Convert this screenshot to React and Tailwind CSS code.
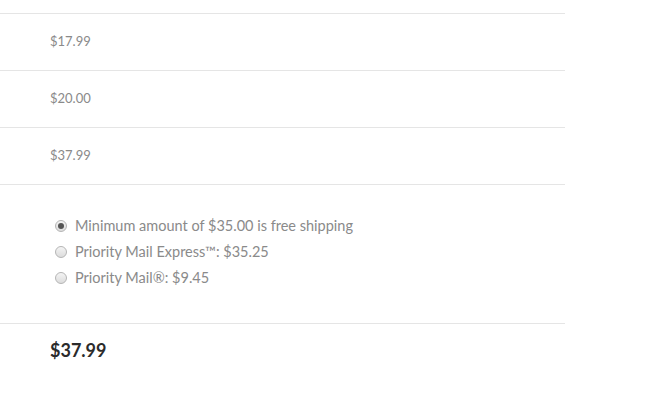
export default function App() {
  const rows = ['$17.99', '$20.00', '$37.99']
  const options = [
    { label: 'Minimum amount of $35.00 is free shipping', checked: true },
    { label: 'Priority Mail Express™: $35.25', checked: false },
    { label: 'Priority Mail®: $9.45', checked: false },
  ]

  return (
    <div className="w-[671px] h-[401px] bg-white overflow-hidden" style={{ fontFamily: 'Lato, "Open Sans", sans-serif' }}>
      <div className="w-[565px] pt-[13px]">
        {rows.map((r, i) => (
          <div key={i} className="h-[57px] border-t border-[#e5e5e5] flex items-center pl-[50px] pb-[1px] text-[13px] text-[#8a8a8a]">
            {r}
          </div>
        ))}

        {/* shipping */}
        <div className="h-[139px] border-t border-[#e5e5e5] pl-[55px] pt-[28px]">
          {options.map((o, i) => (
            <label key={i} className="flex items-center h-[26px] text-[14.5px] text-[#8a8a8a]">
              <span className="w-[12px] h-[12px] rounded-full border border-[#b5b5b5] bg-gradient-to-b from-[#f4f4f4] to-[#dcdcdc] flex items-center justify-center mr-[8px]">
                {o.checked && <span className="w-[6px] h-[6px] rounded-full bg-[#555]"></span>}
              </span>
              {o.label}
            </label>
          ))}
        </div>

        <div className="border-t border-[#e5e5e5] pl-[50px] pt-[13px] text-[18px] font-bold text-[#2b2b2b]">
          $37.99
        </div>
      </div>
    </div>
  )
}
